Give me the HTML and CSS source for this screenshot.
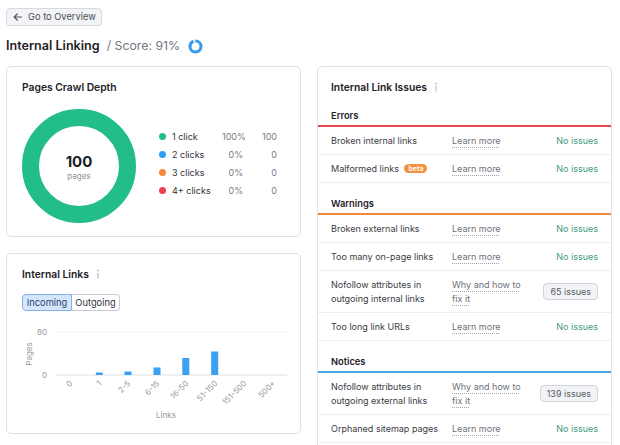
FILE: index.html
```html
<!DOCTYPE html>
<html lang="en">
<head>
<meta charset="utf-8">
<title>Internal Linking</title>
<link rel="stylesheet" href="styles.css">
</head>
<body>
<div class="page">
  <a class="back" href="#">
    <svg class="back-ico" width="9" height="8" viewBox="0 0 9 8"><path d="M8.5 4H1.2M4.3 1 1.2 4l3.1 3" fill="none" stroke="#55575f" stroke-width="1.2" stroke-linecap="round" stroke-linejoin="round"/></svg>
    <span>Go to Overview</span>
  </a>

  <div class="title-row">
    <h1>Internal Linking</h1>
    <span class="score">/ Score: 91%</span>
    <svg class="score-ring" width="15" height="15" viewBox="0 0 15 15">
      <circle cx="7.5" cy="7.5" r="5.5" fill="none" stroke="#cfe5fa" stroke-width="3"/>
      <circle cx="7.5" cy="7.5" r="5.5" fill="none" stroke="#3a9cec" stroke-width="3" stroke-dasharray="31.4 34.6" transform="rotate(-90 7.5 7.5)"/>
    </svg>
  </div>

  <div class="columns">
    <div class="left">
      <section class="card depth">
        <h2 class="card-title">Pages Crawl Depth</h2>
        <div class="depth-body">
          <div class="donut">
            <div class="donut-num">100</div>
            <div class="donut-sub">pages</div>
          </div>
          <div class="legend">
            <span class="dot green"></span><span class="lg-label">1 click</span><span class="lg-num">100%</span><span class="lg-num">100</span>
            <span class="dot blue"></span><span class="lg-label">2 clicks</span><span class="lg-num">0%</span><span class="lg-num">0</span>
            <span class="dot orange"></span><span class="lg-label">3 clicks</span><span class="lg-num">0%</span><span class="lg-num">0</span>
            <span class="dot red"></span><span class="lg-label">4+ clicks</span><span class="lg-num">0%</span><span class="lg-num">0</span>
          </div>
        </div>
      </section>

      <section class="card links">
        <h2 class="card-title">Internal Links <svg class="info" width="4" height="10" viewBox="0 0 4 10"><circle cx="2" cy="1.4" r="1" fill="#b7b9c2"/><rect x="1.4" y="3.8" width="1.2" height="5.8" rx="0.5" fill="#b7b9c2"/></svg></h2>
        <div class="toggle">
          <button class="tg active">Incoming</button><button class="tg">Outgoing</button>
        </div>
        <svg class="chart" width="270" height="100" viewBox="0 0 270 100">
          <g class="axis-text">
            <text x="25" y="13" text-anchor="end">80</text>
            <text x="25" y="56" text-anchor="end">0</text>
            <text x="10" y="32" text-anchor="middle" transform="rotate(-90 10 32)">Pages</text>
            <text x="144" y="96" text-anchor="middle">Links</text>
          </g>
          <line x1="34" y1="10" x2="265" y2="10" stroke="#eceef2" stroke-width="1"/>
          <line x1="34" y1="53" x2="265" y2="53" stroke="#dfe1e6" stroke-width="1"/>
          <g fill="#3ba0f2">
            <rect x="73.8" y="50.5" width="7" height="2.5"/>
            <rect x="102.5" y="49.5" width="7" height="3.5"/>
            <rect x="131.5" y="45.5" width="7" height="7.5"/>
            <rect x="160.3" y="36" width="7" height="17"/>
            <rect x="189.2" y="29.5" width="7" height="23.5"/>
          </g>
          <g class="axis-text" text-anchor="end">
            <text x="51" y="62" transform="rotate(-45 51 62)">0</text>
            <text x="80" y="62" transform="rotate(-45 80 62)">1</text>
            <text x="109" y="62" transform="rotate(-45 109 62)">2-5</text>
            <text x="138" y="62" transform="rotate(-45 138 62)">6-15</text>
            <text x="167" y="62" transform="rotate(-45 167 62)">16-50</text>
            <text x="196" y="62" transform="rotate(-45 196 62)">51-150</text>
            <text x="225" y="62" transform="rotate(-45 225 62)">151-500</text>
            <text x="254" y="62" transform="rotate(-45 254 62)">500+</text>
          </g>
        </svg>
      </section>
    </div>

    <section class="card issues">
      <h2 class="card-title issues-title">Internal Link Issues <svg class="info" width="4" height="10" viewBox="0 0 4 10"><circle cx="2" cy="1.4" r="1" fill="#c3c5cd"/><rect x="1.4" y="3.8" width="1.2" height="5.8" rx="0.5" fill="#c3c5cd"/></svg></h2>

      <div class="sec sec-error">Errors</div>
      <div class="row"><span>Broken internal links</span><a class="learn" href="#">Learn more</a><span class="ok">No issues</span></div>
      <div class="row"><span>Malformed links <span class="beta">beta</span></span><a class="learn" href="#">Learn more</a><span class="ok">No issues</span></div>

      <div class="sec sec-warn">Warnings</div>
      <div class="row"><span>Broken external links</span><a class="learn" href="#">Learn more</a><span class="ok">No issues</span></div>
      <div class="row"><span>Too many on-page links</span><a class="learn" href="#">Learn more</a><span class="ok">No issues</span></div>
      <div class="row"><span>Nofollow attributes in outgoing internal links</span><a class="learn" href="#">Why and how to fix it</a><span class="count">65 issues</span></div>
      <div class="row"><span>Too long link URLs</span><a class="learn" href="#">Learn more</a><span class="ok">No issues</span></div>

      <div class="sec sec-notice">Notices</div>
      <div class="row"><span>Nofollow attributes in outgoing external links</span><a class="learn" href="#">Why and how to fix it</a><span class="count">139 issues</span></div>
      <div class="row"><span>Orphaned sitemap pages</span><a class="learn" href="#">Learn more</a><span class="ok">No issues</span></div>
    </section>
  </div>
</div>
</body>
</html>
```

FILE: styles.css
```css
* { box-sizing: border-box; }

body {
  margin: 0;
  background: #ffffff;
  color: #212329;
  font-family: Inter, "Noto Sans", "Liberation Sans", sans-serif;
}

.page {
  padding: 8px 8px 0 6px;
}

.back {
  display: flex;
  width: max-content;
  align-items: center;
  gap: 6px;
  height: 18px;
  padding: 0 5px 0 6px;
  border: 1px solid #d7d9e0;
  border-radius: 4px;
  background: #f3f4f8;
  color: #4b4d57;
  font-size: 9.3px;
  line-height: 16px;
  text-decoration: none;
}

.back-ico { display: block; }

.title-row {
  display: flex;
  align-items: center;
  height: 16px;
  margin-top: 12px;
}

.title-row h1 {
  margin: 0;
  font-size: 12.6px;
  font-weight: 600;
  line-height: 16px;
  color: #1f2127;
}

.score {
  margin-left: 7px;
  font-size: 12.3px;
  line-height: 16px;
  color: #74767f;
}

.score-ring {
  display: block;
  margin-left: 8px;
}

.columns {
  display: grid;
  grid-template-columns: 295px 295px;
  column-gap: 16px;
  align-items: start;
  margin-top: 12px;
}

.left {
  display: flex;
  flex-direction: column;
  gap: 16px;
}

.card {
  border: 1px solid #e0e1e7;
  border-radius: 5px;
  background: #fff;
}

.card-title {
  display: flex;
  align-items: center;
  gap: 7px;
  margin: 0;
  font-size: 10.3px;
  font-weight: 600;
  line-height: 14px;
  color: #1f2127;
}

.info { display: block; }

/* Crawl depth */
.depth {
  height: 171px;
  padding: 13px 15px 0;
}

.depth-body {
  display: flex;
  align-items: center;
  gap: 23px;
  margin-top: 15px;
}

.donut {
  width: 114px;
  height: 114px;
  flex: none;
  border: 17px solid #22bd8b;
  border-radius: 50%;
  display: flex;
  flex-direction: column;
  align-items: center;
  justify-content: center;
}

.donut-num {
  margin-top: 2px;
  font-size: 15px;
  font-weight: 700;
  line-height: 18px;
  color: #1b1d23;
}

.donut-sub {
  font-size: 8px;
  line-height: 10px;
  color: #8d8f99;
}

.legend {
  display: grid;
  grid-template-columns: 13px 50px 21px 34px;
  grid-auto-rows: 17.7px;
  align-items: center;
  font-size: 9px;
  margin-bottom: 5px;
}

.dot {
  width: 7px;
  height: 7px;
  border-radius: 50%;
}
.dot.green { background: #22bd8b; }
.dot.blue { background: #2e9df4; }
.dot.orange { background: #f5883c; }
.dot.red { background: #ee3f50; }

.lg-label { color: #2f3138; }
.lg-num {
  text-align: right;
  color: #7a7c86;
  white-space: nowrap;
}

/* Internal links */
.links {
  height: 181px;
  padding: 13px 15px 11px;
}

.toggle {
  display: flex;
  margin-top: 13px;
}

.tg {
  height: 17px;
  padding: 0;
  margin: 0;
  border: 1px solid #c9cbd4;
  background: #fff;
  color: #33353c;
  font-family: inherit;
  font-size: 9.3px;
  line-height: 15px;
}
.tg:first-child {
  width: 50px;
  border-radius: 4px 0 0 4px;
}
.tg:last-child {
  width: 48px;
  border-left: none;
  border-radius: 0 4px 4px 0;
}
.tg.active {
  background: #d5e6fb;
  border-color: #80b2ec;
  color: #26456a;
}

.chart {
  display: block;
  margin-top: 11px;
}

.axis-text text {
  font-family: Inter, "Noto Sans", sans-serif;
  font-size: 8px;
  fill: #9597a1;
}

/* Issues */
.issues {
  padding: 13px 0 14px;
}

.issues-title {
  padding: 0 13px;
  margin-bottom: 1px;
}

.sec {
  padding: 14px 13px 2px;
  font-size: 9.3px;
  font-weight: 600;
  line-height: 14px;
  color: #1f2127;
  border-bottom: 2px solid #e5484d;
}
.sec-warn { border-bottom-color: #f0893c; }
.sec-notice { border-bottom-color: #4aa3e6; }

.row {
  display: grid;
  grid-template-columns: 121px 80px 1fr;
  align-items: center;
  padding: 6.5px 13px;
  border-bottom: 1px solid #eceef2;
  font-size: 9px;
  line-height: 14px;
  color: #3a3c44;
}

.learn {
  color: #6e707a;
  text-decoration: underline dotted #a3a5ae;
  text-underline-offset: 2.5px;
  justify-self: start;
  max-width: 74px;
}

.ok {
  justify-self: end;
  color: #3f9b7c;
}

.count {
  justify-self: end;
  height: 17px;
  padding: 0 6px;
  border: 1px solid #d2d4dc;
  border-radius: 4px;
  background: #f2f3f6;
  color: #585a63;
  line-height: 15px;
}

.beta {
  display: inline-block;
  margin-left: 3px;
  padding: 0 4px;
  border-radius: 5px;
  background: #f4913f;
  color: #fff;
  font-size: 7px;
  font-weight: 600;
  line-height: 9px;
  vertical-align: 1px;
}
```
